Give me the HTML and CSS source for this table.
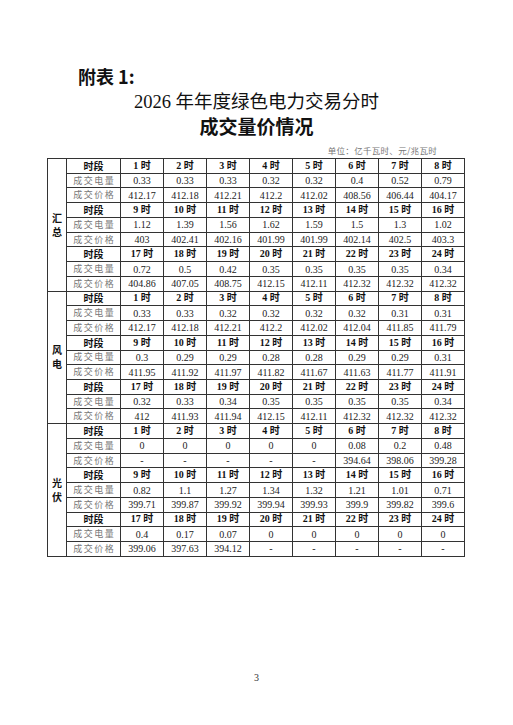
FILE: index.html
```html
<!DOCTYPE html>
<html lang="zh-CN">
<head>
<meta charset="utf-8">
<title>附表1</title>
<link rel="stylesheet" href="styles.css">
</head>
<body>
<div class="page">
  <div class="appendix">附表 1:</div>
  <h1 class="title"><span class="num">2026</span> 年年度绿色电力交易分时<br><b>成交量价情况</b></h1>
  <div class="unit">单位：亿千瓦时、元/兆瓦时</div>
  <table class="data">
    <colgroup><col class="c-sec"><col class="c-lab"><col span="8"></colgroup>
    <tbody class="sec">
      <tr class="hd"><td class="seclab" rowspan="9">汇<br>总</td><td class="lab">时段</td><td>1 时</td><td>2 时</td><td>3 时</td><td>4 时</td><td>5 时</td><td>6 时</td><td>7 时</td><td>8 时</td></tr>
      <tr><td class="lab sub">成交电量</td><td>0.33</td><td>0.33</td><td>0.33</td><td>0.32</td><td>0.32</td><td>0.4</td><td>0.52</td><td>0.79</td></tr>
      <tr><td class="lab sub">成交价格</td><td>412.17</td><td>412.18</td><td>412.21</td><td>412.2</td><td>412.02</td><td>408.56</td><td>406.44</td><td>404.17</td></tr>
      <tr class="hd"><td class="lab">时段</td><td>9 时</td><td>10 时</td><td>11 时</td><td>12 时</td><td>13 时</td><td>14 时</td><td>15 时</td><td>16 时</td></tr>
      <tr><td class="lab sub">成交电量</td><td>1.12</td><td>1.39</td><td>1.56</td><td>1.62</td><td>1.59</td><td>1.5</td><td>1.3</td><td>1.02</td></tr>
      <tr><td class="lab sub">成交价格</td><td>403</td><td>402.41</td><td>402.16</td><td>401.99</td><td>401.99</td><td>402.14</td><td>402.5</td><td>403.3</td></tr>
      <tr class="hd"><td class="lab">时段</td><td>17 时</td><td>18 时</td><td>19 时</td><td>20 时</td><td>21 时</td><td>22 时</td><td>23 时</td><td>24 时</td></tr>
      <tr><td class="lab sub">成交电量</td><td>0.72</td><td>0.5</td><td>0.42</td><td>0.35</td><td>0.35</td><td>0.35</td><td>0.35</td><td>0.34</td></tr>
      <tr><td class="lab sub">成交价格</td><td>404.86</td><td>407.05</td><td>408.75</td><td>412.15</td><td>412.11</td><td>412.32</td><td>412.32</td><td>412.32</td></tr>
    </tbody>
    <tbody class="sec">
      <tr class="hd"><td class="seclab" rowspan="9">风<br>电</td><td class="lab">时段</td><td>1 时</td><td>2 时</td><td>3 时</td><td>4 时</td><td>5 时</td><td>6 时</td><td>7 时</td><td>8 时</td></tr>
      <tr><td class="lab sub">成交电量</td><td>0.33</td><td>0.33</td><td>0.32</td><td>0.32</td><td>0.32</td><td>0.32</td><td>0.31</td><td>0.31</td></tr>
      <tr><td class="lab sub">成交价格</td><td>412.17</td><td>412.18</td><td>412.21</td><td>412.2</td><td>412.02</td><td>412.04</td><td>411.85</td><td>411.79</td></tr>
      <tr class="hd"><td class="lab">时段</td><td>9 时</td><td>10 时</td><td>11 时</td><td>12 时</td><td>13 时</td><td>14 时</td><td>15 时</td><td>16 时</td></tr>
      <tr><td class="lab sub">成交电量</td><td>0.3</td><td>0.29</td><td>0.29</td><td>0.28</td><td>0.28</td><td>0.29</td><td>0.29</td><td>0.31</td></tr>
      <tr><td class="lab sub">成交价格</td><td>411.95</td><td>411.92</td><td>411.97</td><td>411.82</td><td>411.67</td><td>411.63</td><td>411.77</td><td>411.91</td></tr>
      <tr class="hd"><td class="lab">时段</td><td>17 时</td><td>18 时</td><td>19 时</td><td>20 时</td><td>21 时</td><td>22 时</td><td>23 时</td><td>24 时</td></tr>
      <tr><td class="lab sub">成交电量</td><td>0.32</td><td>0.33</td><td>0.34</td><td>0.35</td><td>0.35</td><td>0.35</td><td>0.35</td><td>0.34</td></tr>
      <tr><td class="lab sub">成交价格</td><td>412</td><td>411.93</td><td>411.94</td><td>412.15</td><td>412.11</td><td>412.32</td><td>412.32</td><td>412.32</td></tr>
    </tbody>
    <tbody class="sec">
      <tr class="hd"><td class="seclab" rowspan="9">光<br>伏</td><td class="lab">时段</td><td>1 时</td><td>2 时</td><td>3 时</td><td>4 时</td><td>5 时</td><td>6 时</td><td>7 时</td><td>8 时</td></tr>
      <tr><td class="lab sub">成交电量</td><td>0</td><td>0</td><td>0</td><td>0</td><td>0</td><td>0.08</td><td>0.2</td><td>0.48</td></tr>
      <tr><td class="lab sub">成交价格</td><td>-</td><td>-</td><td>-</td><td>-</td><td>-</td><td>394.64</td><td>398.06</td><td>399.28</td></tr>
      <tr class="hd"><td class="lab">时段</td><td>9 时</td><td>10 时</td><td>11 时</td><td>12 时</td><td>13 时</td><td>14 时</td><td>15 时</td><td>16 时</td></tr>
      <tr><td class="lab sub">成交电量</td><td>0.82</td><td>1.1</td><td>1.27</td><td>1.34</td><td>1.32</td><td>1.21</td><td>1.01</td><td>0.71</td></tr>
      <tr><td class="lab sub">成交价格</td><td>399.71</td><td>399.87</td><td>399.92</td><td>399.94</td><td>399.93</td><td>399.9</td><td>399.82</td><td>399.6</td></tr>
      <tr class="hd"><td class="lab">时段</td><td>17 时</td><td>18 时</td><td>19 时</td><td>20 时</td><td>21 时</td><td>22 时</td><td>23 时</td><td>24 时</td></tr>
      <tr><td class="lab sub">成交电量</td><td>0.4</td><td>0.17</td><td>0.07</td><td>0</td><td>0</td><td>0</td><td>0</td><td>0</td></tr>
      <tr><td class="lab sub">成交价格</td><td>399.06</td><td>397.63</td><td>394.12</td><td>-</td><td>-</td><td>-</td><td>-</td><td>-</td></tr>
    </tbody>
  </table>
  <div class="pageno">3</div>
</div>
</body>
</html>
```
FILE: styles.css
```css
html, body {
  margin: 0;
  padding: 0;
  background: #ffffff;
}
body {
  font-family: "Liberation Serif", "Noto Sans CJK SC", serif;
  color: #111;
}
.page {
  width: 513px;
  height: 725px;
  box-sizing: border-box;
  padding-top: 65px;
  display: flex;
  flex-direction: column;
}
.appendix {
  margin-left: 78px;
  font-family: "Noto Sans CJK SC", sans-serif;
  font-weight: 700;
  font-size: 18px;
  line-height: 22px;
  color: #111;
}
.title {
  margin: 3px 0 0 0;
  text-align: center;
  font-family: "Liberation Serif", "Noto Sans CJK SC", serif;
  font-weight: 400;
  font-size: 18.5px;
  line-height: 24px;
  color: #111;
}
.title .num {
  font-family: "Liberation Serif", serif;
}
.title b {
  font-family: "Noto Sans CJK SC", sans-serif;
  font-weight: 700;
  font-size: 19px;
}
.unit {
  margin: 5px 0 0 0;
  padding-right: 76px;
  text-align: right;
  font-family: "Noto Sans CJK SC", sans-serif;
  font-size: 8.5px;
  line-height: 10px;
  letter-spacing: 0.3px;
  color: #777;
}
.data {
  margin: 3px 0 0 47px;
  width: 418px;
  border-collapse: collapse;
  table-layout: fixed;
  border: 1.5px solid #222;
}
.data col.c-sec { width: 19px; }
.data col.c-lab { width: 54px; }
.data tbody.sec { border-top: 1.5px solid #222; }
.data tr { height: 14.74px; }
.data td {
  border: 1px solid #333;
  height: 12.5px;
  padding: 0;
  text-align: center;
  vertical-align: middle;
  font-family: "Liberation Serif", "Noto Sans CJK SC", serif;
  font-size: 10px;
  line-height: 12px;
  color: #222;
  white-space: nowrap;
  overflow: hidden;
}
.data tr:not(.hd) td:not(.lab):not(.seclab) {
  padding-top: 1px;
  height: 11.5px;
}
.data tr.hd td {
  font-weight: 700;
  font-size: 10px;
  color: #111;
}
.data td.lab {
  font-family: "Noto Sans CJK SC", sans-serif;
  font-size: 9px;
  font-weight: 700;
}
.data td.lab.sub {
  font-weight: 400;
  color: #777;
  letter-spacing: 1.5px;
  text-indent: 1.5px;
}
.data td.seclab {
  font-family: "Noto Sans CJK SC", sans-serif;
  font-size: 10px;
  line-height: 14px;
  font-weight: 400;
  color: #333;
  white-space: normal;
}
.pageno {
  margin-top: auto;
  margin-bottom: 42px;
  text-align: center;
  font-family: "Liberation Serif", serif;
  font-size: 10px;
  color: #333;
}
```
